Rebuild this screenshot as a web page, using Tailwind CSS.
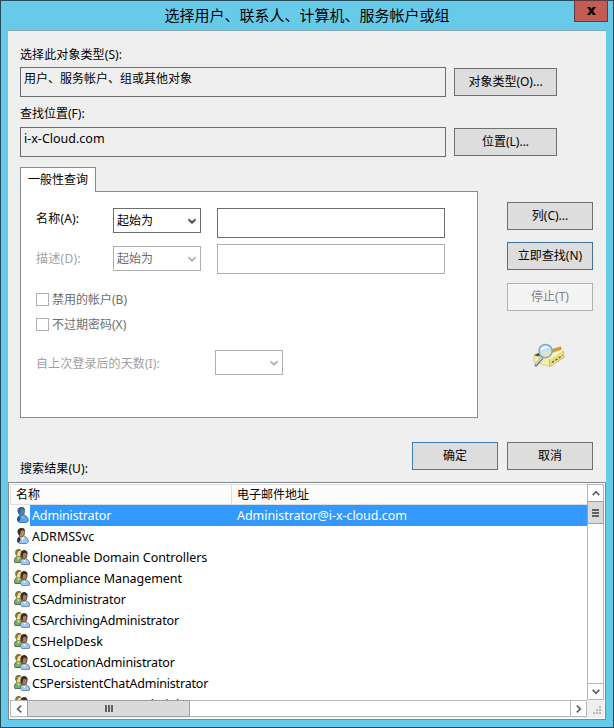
<!DOCTYPE html>
<html lang="zh-CN">
<head>
<meta charset="utf-8">
<title>选择用户、联系人、计算机、服务帐户或组</title>
<script src="https://cdn.jsdelivr.net/npm/@tailwindcss/browser@4"></script>
</head>
<body class="overflow-hidden">
<svg width="0" height="0" class="absolute">
  <defs>
    <symbol id="user" viewBox="0 0 13 16">
      <path d="M1.500 14C1 11 2 9.500 4 8.500L8 8C11 9 12.500 11 12.300 14L10.500 15.500H3.500Z" fill="#a3c8ef" stroke="#4a6c96" stroke-width=".8"/>
      <path d="M1.200 13.500C.8 11 2 9 4 8.500L4.500 12L3 15Z" fill="#2c3a4c"/>
      <path d="M4.500 8.500L6.500 12.500L8.500 8.500Z" fill="#fff"/>
      <path d="M2.200 3.500C2.200 1.500 3.500 .4 5.500 .4C7.800.4 8.800 2 8.600 4.500C8.400 7 7.500 9 6 9C4 9 2.200 7 2.200 3.500Z" fill="#b98a60" stroke="#3a2a1c" stroke-width=".6"/>
      <path d="M1.500 4C1.500 1 3.500 0 5.500 0C7.800 0 9 1.200 8.900 3L6.500 2.200L4.800 3L4 7.500L2.500 6.500Z" fill="#3a2e26"/>
    </symbol>
    <symbol id="user-sel" viewBox="0 0 13 16">
      <path d="M1.500 14C1 11 2 9.500 4 8.500L8 8C11 9 12.500 11 12.300 14L10.500 15.500H3.500Z" fill="#5fa3ea" stroke="#2a629e" stroke-width=".8"/>
      <path d="M1.200 13.500C.8 11 2 9 4 8.500L4.500 12L3 15Z" fill="#235a94"/>
      <path d="M4.500 8.500L6.500 12L8.500 8.500Z" fill="#8bbff2"/>
      <path d="M2.200 3.500C2.200 1.500 3.500 .4 5.500 .4C7.800.4 8.800 2 8.600 4.500C8.400 7 7.500 9 6 9C4 9 2.200 7 2.200 3.500Z" fill="#5483b4" stroke="#2c5c8e" stroke-width=".6"/>
      <path d="M1.500 4C1.500 1 3.500 0 5.500 0C7.800 0 9 1.200 8.900 3L6.500 2.200L4.800 3L4 7.500L2.500 6.500Z" fill="#336394"/>
    </symbol>
    <symbol id="group" viewBox="0 0 16 16">
      <path d="M.5 12.500C.2 9.500 1.500 8 3.500 7.500H7L9 13.500H1Z" fill="#7fae5e" stroke="#35542a" stroke-width=".8"/>
      <path d="M3 8L4.500 11L6 8Z" fill="#d9ecc4"/>
      <path d="M1.800 3C1.800 1.200 3.300 .4 4.800 .4C6.800 .4 7.800 2 7.600 4C7.300 6.500 6.300 8 4.800 8C3 8 1.800 6 1.800 3Z" fill="#ecdca0" stroke="#6b5520" stroke-width=".7"/>
      <path d="M1.300 5C.8 2 2.800 0 4.800 0L7 1L4 2.500L2.800 6.500Z" fill="#8a7434"/>
      <path d="M6.500 13.500C6 11.500 7 10.300 9 10H12C14.500 10.500 15.700 12 15.700 15L14 15.700H8Z" fill="#a3c8ef" stroke="#4a6c96" stroke-width=".8"/>
      <path d="M8.500 10L10.500 13L12 10Z" fill="#fff"/>
      <path d="M7.300 5C7.300 3 8.500 1.600 10.300 1.600C12.500 1.600 13.300 3.500 13 5.700C12.800 8.500 11.800 10.300 10.300 10.300C8.300 10.300 7.300 8 7.300 5Z" fill="#a87c58" stroke="#2e1e14" stroke-width=".7"/>
      <path d="M6.800 6.500C6 3 8 1.200 10.300 1.200C12.500 1.200 13.700 3 13.300 5L11 3.800L9 4.500L8.500 9Z" fill="#3c2d25"/>
    </symbol>
    <symbol id="arrow" viewBox="0 0 8 6"><path d="M.3.2L4 3L7.700.2V2.700L4 6L.3 2.700Z" fill="currentColor"/></symbol>
    <symbol id="chevron" viewBox="0 0 8 6"><path d="M.7.8L4 4.300L7.300.8" fill="none" stroke="currentColor" stroke-width="1.700"/></symbol>
  </defs>
</svg>
<div class="flex h-[728px] w-[614px] flex-col border border-[#264b5b] bg-[#67cae8] px-[7px] pb-[7px] font-['Noto_Sans','Noto_Sans_CJK_SC',sans-serif] text-[12px] leading-[18px] text-black">
  <header class="relative h-[29px] shrink-0 text-center">
    <h1 class="pt-[2px] text-[15px] leading-[24px]">选择用户、联系人、计算机、服务帐户或组</h1>
    <button class="absolute -top-px right-[-2px] flex h-[22px] w-[34px] items-center justify-center border border-[#5d3b42] bg-[#c35c54]">
      <svg width="9" height="8" viewBox="0 0 9 8"><path d="M0 0H3L4.500 2L6 0H9L6 4L9 8H6L4.500 6L3 8H0L3 4Z" fill="#000"/></svg>
    </button>
  </header>
  <main class="flex h-[690px] w-[598px] shrink-0 flex-col border-t border-[#8aa9b5] bg-[#efefef]">
    <div class="ml-[12px] mt-[15px] h-[21px] tracking-[0.1px]">选择此对象类型(S):</div>
    <div class="ml-[12px] flex items-center gap-[8px]">
      <div class="h-[30px] w-[426px] border border-[#6d6d6d] px-[3px] pt-[2px]">用户、服务帐户、组或其他对象</div>
      <button class="h-[28px] w-[103px] border border-[#707070] bg-[#dddddd]">对象类型(O)...</button>
    </div>
    <div class="ml-[12px] mt-[8px] h-[22px]">查找位置(F):</div>
    <div class="ml-[12px] flex items-center gap-[8px]">
      <div class="h-[30px] w-[426px] border border-[#6d6d6d] px-[3px] pt-[2px] text-[12.5px]">i-x-Cloud.com</div>
      <button class="h-[28px] w-[103px] border border-[#707070] bg-[#dddddd]">位置(L)...</button>
    </div>
    <div class="ml-[12px] mt-[10px] flex h-[251px]">
      <section class="w-[458px]">
        <div class="relative z-10 h-[25px] w-[76px] border border-b-0 border-[#898c95] bg-white pl-[7px] pt-[3px]">一般性查询</div>
        <div class="-mt-px h-[227px] border border-[#898c95] bg-white pl-[15px] pt-[16px]">
          <div class="flex h-[30px]">
            <div class="w-[77px] pt-[2px] tracking-[0.2px]">名称(A):</div>
            <div class="flex h-[25px] w-[88px] items-center justify-between border border-[#6d6d6d] pl-[3px] pr-[4px]"><span>起始为</span><svg class="text-[#505050]" width="8" height="6"><use href="#arrow"/></svg></div>
            <div class="ml-[16px] h-[30px] w-[228px] border border-[#6d6d6d]"></div>
          </div>
          <div class="mt-[6px] flex h-[30px]">
            <div class="w-[77px] pt-[6px] text-[#a0a0a0] tracking-[0.3px]">描述(D):</div>
            <div class="mt-[2px] flex h-[25px] w-[88px] items-center justify-between border border-[#b0b0b0] pl-[3px] pr-[4px]"><span class="text-[#6d6d6d]">起始为</span><svg class="text-[#b8b8b8]" width="8" height="6"><use href="#arrow"/></svg></div>
            <div class="ml-[16px] h-[30px] w-[228px] border border-[#b0b0b0]"></div>
          </div>
          <div class="mt-[17px] flex h-[18px] items-start gap-[3px] text-[#6d6d6d]"><i class="mt-[2px] size-[13px] border border-[#b0b0b0]"></i>禁用的帐户(B)</div>
          <div class="mt-[7px] flex h-[18px] items-start gap-[3px] text-[#6d6d6d]"><i class="mt-[2px] size-[13px] border border-[#b0b0b0]"></i>不过期密码(X)</div>
          <div class="mt-[16px] flex h-[25px] items-center">
            <div class="w-[179px] pt-[2px] text-[#a0a0a0] tracking-[0.1px]">自上次登录后的天数(I):</div>
            <div class="flex h-[25px] w-[68px] items-center justify-end border border-[#b0b0b0] pr-[4px]"><svg class="text-[#b8b8b8]" width="8" height="6"><use href="#arrow"/></svg></div>
          </div>
        </div>
      </section>
      <aside class="ml-[29px] flex w-[86px] flex-col pt-[35px]">
        <button class="h-[28px] border border-[#707070] bg-[#dddddd]">列(C)...</button>
        <button class="mt-[12px] h-[28px] border border-[#3f7299] bg-[#dddddd]">立即查找(N)</button>
        <button class="mt-[13px] h-[28px] border border-[#adb2b5] bg-[#f4f4f4] text-[#838383]">停止(T)</button>
        <svg class="ml-[26px] mt-[32px]" width="34" height="25" viewBox="0 0 34 25">
          <path d="M1 12L9 8L28 3.500L28.500 7L18 14L4 15Z" fill="#eccb5c"/>
          <path d="M1 12L6 10L9 13L3 13Z" fill="#514a2c"/>
          <path d="M17 7L28 3.500L28.500 6.500L19 9.500Z" fill="#cf9a34"/>
          <path d="M1 12.500L17 16V23.500L1 19Z" fill="#f5edaa" stroke="#c3b66c" stroke-width=".6"/>
          <path d="M16 15.500L30.500 8L31 14.500L17 23.500Z" fill="#e9dc83" stroke="#b5a555" stroke-width=".6"/>
          <path d="M9 14L28 7L30.500 8L17 16Z" fill="#faf4c2"/>
          <path d="M19 19.500L29.500 12.500" stroke="#5f5730" stroke-width="1.200" stroke-dasharray="2.500 1.500"/>
          <path d="M9 15L3 22" stroke="#777b80" stroke-width="3" stroke-linecap="round"/>
          <path d="M9 14.500L2.500 21.500" stroke="#dfe2e4" stroke-width="1.200"/>
          <circle cx="12.500" cy="8" r="6.600" fill="#c3e1f3" stroke="#7fa9cb" stroke-width="1.500"/>
          <path d="M7.500 11Q13 7.500 18 8.500Q17 13 13 13.500Q9 13.500 7.500 11Z" fill="#e4e4c2"/>
          <path d="M8.500 7Q10 3.500 15 4" fill="none" stroke="#fff" stroke-width="1.500"/>
        </svg>
      </aside>
    </div>
    <div class="flex h-[64px]">
      <div class="w-[404px] pl-[12px] pt-[42px] tracking-[0.1px]">搜索结果(U):</div>
      <button class="mt-[24px] h-[28px] w-[86px] border border-[#3f7faf] bg-[#dddddd]">确定</button>
      <button class="ml-[9px] mt-[24px] h-[28px] w-[86px] border border-[#707070] bg-[#dddddd]">取消</button>
    </div>
    <section class="flex h-[238px] w-[598px] flex-col border border-[#828790] bg-white p-px">
      <div class="flex h-[216px]">
        <div class="h-[216px] w-[577px] overflow-hidden">
          <div class="flex h-[21px] border-t border-[#e0e0e0] bg-[#fcfcfc]">
            <div class="w-[222px] border-b border-l border-r border-[#dedede] pl-[5px] pt-[1px]">名称</div>
            <div class="flex-1 border-b border-[#dedede] pl-[5px] pt-[1px]">电子邮件地址</div>
          </div>
          <ul class="text-[12.5px] leading-[21px]">
            <li class="flex h-[21px]"><svg class="ml-[6px] mt-[2px]" width="13" height="16"><use href="#user-sel"/></svg><div class="ml-px flex flex-1 border border-dotted border-[#b97b3c] bg-[#3399ff] pl-px leading-[19px] text-white"><span class="w-[205px] tracking-[-0.15px]">Administrator</span><span class="tracking-[-0.05px]">Administrator@i-x-cloud.com</span></div></li>
            <li class="flex h-[21px]"><svg class="ml-[6px] mt-[2px]" width="13" height="16"><use href="#user"/></svg><span class="ml-[3px]">ADRMSSvc</span></li>
            <li class="flex h-[21px]"><svg class="ml-[4px] mt-[2px]" width="16" height="16"><use href="#group"/></svg><span class="ml-[2px] tracking-[-0.03px]">Cloneable Domain Controllers</span></li>
            <li class="flex h-[21px]"><svg class="ml-[4px] mt-[2px]" width="16" height="16"><use href="#group"/></svg><span class="ml-[2px] tracking-[-0.06px]">Compliance Management</span></li>
            <li class="flex h-[21px]"><svg class="ml-[4px] mt-[2px]" width="16" height="16"><use href="#group"/></svg><span class="ml-[2px] tracking-[-0.15px]">CSAdministrator</span></li>
            <li class="flex h-[21px]"><svg class="ml-[4px] mt-[2px]" width="16" height="16"><use href="#group"/></svg><span class="ml-[2px] tracking-[-0.16px]">CSArchivingAdministrator</span></li>
            <li class="flex h-[21px]"><svg class="ml-[4px] mt-[2px]" width="16" height="16"><use href="#group"/></svg><span class="ml-[2px]">CSHelpDesk</span></li>
            <li class="flex h-[21px]"><svg class="ml-[4px] mt-[2px]" width="16" height="16"><use href="#group"/></svg><span class="ml-[2px] tracking-[-0.15px]">CSLocationAdministrator</span></li>
            <li class="flex h-[21px]"><svg class="ml-[4px] mt-[2px]" width="16" height="16"><use href="#group"/></svg><span class="ml-[2px] tracking-[-0.2px]">CSPersistentChatAdministrator</span></li>
            <li class="flex h-[21px]"><svg class="ml-[4px] mt-[2px]" width="16" height="16"><use href="#group"/></svg><span class="ml-[2px] tracking-[-0.15px]">CSResponseGroupAdministrator</span></li>
          </ul>
        </div>
        <div class="flex w-[17px] flex-col border border-[#b8b8b8] bg-white">
          <div class="flex h-[16px] items-center justify-center"><svg class="rotate-180 text-[#606060]" width="8" height="6"><use href="#chevron"/></svg></div>
          <div class="-mx-px flex h-[23px] flex-col items-center justify-center gap-px border border-[#a0a0a0] bg-[#dadada]"><i class="h-[2px] w-[7px] bg-[#606060]"></i><i class="h-[2px] w-[7px] bg-[#606060]"></i><i class="h-[2px] w-[7px] bg-[#606060]"></i></div>
          <div class="mt-auto flex h-[16px] items-center justify-center border-t border-[#b8b8b8]"><svg class="text-[#606060]" width="8" height="6"><use href="#chevron"/></svg></div>
        </div>
      </div>
      <div class="flex h-[18px] bg-[#efefef]">
        <div class="flex h-[17px] w-[577px] border border-[#b8b8b8] bg-white">
          <div class="flex w-[16px] items-center justify-center"><svg class="rotate-90 text-[#606060]" width="8" height="6"><use href="#chevron"/></svg></div>
          <div class="-my-px flex w-[163px] items-center justify-center gap-px border border-[#a0a0a0] bg-[#dadada]"><i class="h-[7px] w-[2px] bg-[#606060]"></i><i class="h-[7px] w-[2px] bg-[#606060]"></i><i class="h-[7px] w-[2px] bg-[#606060]"></i></div>
          <div class="ml-auto flex w-[16px] items-center justify-center border-l border-[#b8b8b8]"><svg class="-rotate-90 text-[#606060]" width="8" height="6"><use href="#chevron"/></svg></div>
        </div>
        <svg class="ml-[6px] mt-[6px]" width="9" height="9" fill="#b8b8b8"><path d="M6 0h2v2h-2zM3 3h2v2h-2zM6 3h2v2h-2zM0 6h2v2h-2zM3 6h2v2h-2zM6 6h2v2h-2z"/></svg>
      </div>
    </section>
  </main>
</div>
</body>
</html>
